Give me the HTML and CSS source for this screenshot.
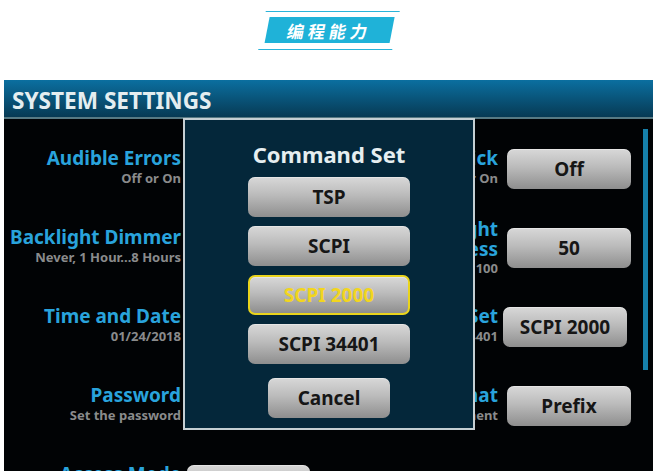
FILE: index.html
```html
<!DOCTYPE html>
<html lang="zh-CN">
<head>
<meta charset="utf-8">
<title>System Settings</title>
<link rel="stylesheet" href="styles.css">
</head>
<body>
<header class="banner">
  <div class="banner-skew">
    <div class="banner-line"></div>
    <div class="banner-box"><span class="banner-text">编程能力</span></div>
    <div class="banner-line"></div>
  </div>
</header>
<main class="screen">
  <div class="titlebar"><h1 class="title">SYSTEM SETTINGS</h1></div>
  <section class="settings">
    <div class="grid">
      <div class="label-cell"><div class="lbl">Audible Errors</div><div class="sub">Off or On</div></div>
      <div class="btn-cell"><div class="btn"></div></div>
      <div class="label-cell label-cell-clip"><div class="lbl">Key Click</div><div class="sub">Off or On</div></div>
      <div class="btn-cell btn-cell-right"><div class="btn">Off</div></div>
      <div class="scrollbar"></div>

      <div class="label-cell"><div class="lbl">Backlight Dimmer</div><div class="sub">Never, 1 Hour...8 Hours</div></div>
      <div class="btn-cell"><div class="btn"></div></div>
      <div class="label-cell label-cell-clip label-cell-tall"><div class="lbl lbl-tight">Backlight</div><div class="lbl lbl-tight">Brightness</div><div class="sub">1 to 100</div></div>
      <div class="btn-cell btn-cell-right"><div class="btn">50</div></div>

      <div class="label-cell"><div class="lbl">Time and Date</div><div class="sub">01/24/2018</div></div>
      <div class="btn-cell"><div class="btn"></div></div>
      <div class="label-cell label-cell-clip"><div class="lbl">Command Set</div><div class="sub">TSP, SCPI...34401</div></div>
      <div class="btn-cell btn-cell-right"><div class="btn btn-shift">SCPI 2000</div></div>

      <div class="label-cell"><div class="lbl">Password</div><div class="sub">Set the password</div></div>
      <div class="btn-cell"><div class="btn"></div></div>
      <div class="label-cell label-cell-clip"><div class="lbl">Reading Format</div><div class="sub">Prefix or Exponent</div></div>
      <div class="btn-cell btn-cell-right"><div class="btn">Prefix</div></div>

      <div class="label-cell"><div class="lbl">Access Mode</div><div class="sub">Full or Locked</div></div>
      <div class="btn-cell"><div class="btn">Full</div></div>
    </div>

    <div class="dialog">
      <h2 class="dialog-title">Command Set</h2>
      <div class="dialog-options">
        <div class="btn btn-option">TSP</div>
        <div class="btn btn-option">SCPI</div>
        <div class="btn btn-option btn-selected">SCPI 2000</div>
        <div class="btn btn-option">SCPI 34401</div>
      </div>
      <div class="btn btn-cancel">Cancel</div>
    </div>
  </section>
</main>
</body>
</html>
```
FILE: styles.css
```css
* {
  box-sizing: border-box;
  margin: 0;
  padding: 0;
}

html,
body {
  height: 100%;
  overflow: hidden;
}

body {
  background: #ffffff;
  font-family: "Noto Sans", "Open Sans", sans-serif;
}

/* ---------- top banner ---------- */
.banner {
  height: 80px;
  display: flex;
  justify-content: center;
  padding-top: 11px;
}

.banner-skew {
  width: 134px;
  height: 39px;
  display: flex;
  flex-direction: column;
  align-items: center;
  transform: skewX(-11deg);
}

.banner-line {
  width: 134px;
  height: 1px;
  background: #2ab3d9;
}

.banner-box {
  width: 125px;
  height: 26px;
  margin: 5px 0 6px;
  background: #1fb2d8;
  display: flex;
  align-items: center;
  justify-content: center;
}

.banner-text {
  font-family: "Noto Sans CJK SC", "Noto Sans", sans-serif;
  font-weight: 700;
  font-size: 17px;
  line-height: 1;
  color: #ffffff;
  letter-spacing: 4px;
  padding-left: 1px;
}

/* ---------- instrument screen ---------- */
.screen {
  margin: 0 4px;
  height: 391px;
  background: #010305;
  overflow: hidden;
  display: flex;
  flex-direction: column;
}

.titlebar {
  height: 39px;
  flex: none;
  background: linear-gradient(#0b6fa0, #073a54);
  border-bottom: 2px solid #577a84;
  padding: 5px 0 0 8px;
  display: flex;
  align-items: center;
}

.title {
  font-size: 22.6px;
  font-weight: 700;
  line-height: 26px;
  color: #e4eef0;
}

.settings {
  position: relative;
  flex: 1;
}

.grid {
  display: grid;
  grid-template-columns: 177px 129px 188px 133px 17px;
  grid-auto-rows: 79px;
  align-items: center;
  padding-top: 10px;
}

.label-cell {
  display: flex;
  flex-direction: column;
  align-items: flex-end;
  margin-bottom: 3px;
  white-space: nowrap;
}

/* right-hand labels: only the part right of the dialog is visible */
.label-cell-clip {
  grid-column: 3;
  justify-self: end;
  width: 23px;
  overflow: hidden;
}

.label-cell-tall {
  margin-bottom: 0;
}

.lbl {
  font-size: 19px;
  font-weight: 700;
  line-height: 22px;
  color: #29a3dc;
}

.lbl-tight {
  line-height: 20px;
}

.sub {
  font-size: 13px;
  font-weight: 700;
  line-height: 18px;
  color: #8a8b8c;
}

.btn-cell {
  display: flex;
  justify-content: flex-end;
}

.btn {
  width: 123px;
  height: 40px;
  border-radius: 7px;
  background: linear-gradient(#d8d8d8, #bbbbbb 45%, #8e8e8e);
  box-shadow: inset 0 1px 0 rgba(255, 255, 255, 0.35);
  color: #161616;
  font-size: 19px;
  font-weight: 700;
  display: flex;
  align-items: center;
  justify-content: center;
  white-space: nowrap;
}

.btn-cell-right .btn {
  width: 124px;
}

.btn-shift {
  margin-right: 4px;
}

.scrollbar {
  grid-column: 5;
  grid-row: 1 / span 4;
  align-self: start;
  justify-self: end;
  width: 5px;
  height: 241px;
  background: #1680aa;
}

/* ---------- dialog overlay ---------- */
.dialog {
  position: absolute;
  left: 179px;
  top: -1px;
  width: 292px;
  height: 312px;
  border: 2px solid #c5cfd3;
  background: #04273a;
  padding-top: 21px;
  display: flex;
  flex-direction: column;
  align-items: center;
}

.dialog-title {
  font-size: 22px;
  font-weight: 700;
  line-height: 26px;
  color: #e6eef0;
}

.dialog-options {
  margin-top: 10px;
  display: flex;
  flex-direction: column;
  gap: 9px;
}

.btn-option {
  width: 162px;
}

.btn-selected {
  border: 2px solid #e9d41c;
  color: #f2d51e;
}

.btn-cancel {
  width: 122px;
  margin-top: 14px;
}
```
